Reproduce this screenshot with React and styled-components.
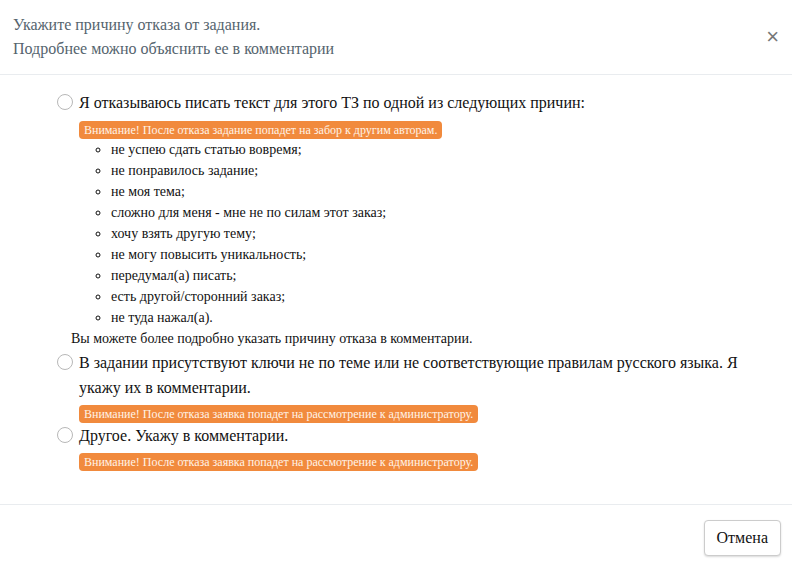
import React from 'react'
import styled, { createGlobalStyle } from 'styled-components'

const Global = createGlobalStyle`
body{
    margin: 0;
    background: #fff;
    font-family: "Liberation Serif", serif;
    color: #111;
}
`

const Modal = styled.div`
width: 792px;
height: 566px;
display: flex;
flex-direction: column;
`

const Header = styled.div`
height: 75px;
box-sizing: border-box;
border-bottom: 1px solid #e9ecef;
display: flex;
align-items: center;
justify-content: space-between;
padding: 0 13px 0 13px;
`

const Title = styled.div`
color: #55646e;
font-size: 16px;
line-height: 24px;
`

const Close = styled.button`
border: none;
background: none;
color: #777;
font-size: 22px;
padding: 0;
font-family: "Liberation Sans", sans-serif;
font-weight: 400;
line-height: 1;
cursor: pointer;
`

const Body = styled.div`
flex: 1;
padding: 15px 20px 0 57px;
box-sizing: border-box;
`

const Option = styled.label`
display: flex;
align-items: flex-start;
gap: 6px;
font-size: 16px;
line-height: 25px;
`

const Radio = styled.span`
flex: none;
width: 16px;
height: 16px;
box-sizing: border-box;
border: 1px solid #b8b8b8;
border-radius: 50%;
margin-top: 4px;
`

const Badge = styled.div`
width: fit-content;
margin: ${p => p.top || 5}px 0 0 22px;
background: #f18a3d;
color: #fff3e8;
font-size: 12px;
line-height: 18px;
padding: 0 5px;
border-radius: 4px;
`

const List = styled.ul`
margin: 0 0 0 22px;
padding: 0 0 0 32px;
list-style: circle;
font-size: 14px;
line-height: 21px;
`

const Note = styled.div`
font-size: 14px;
line-height: 21px;
margin: 0 0 1px 14px;
`

const Group = styled.div`
margin-bottom: ${p => p.gap || 0}px;
`

const Footer = styled.div`
height: 62px;
border-top: 1px solid #e9ecef;
display: flex;
justify-content: flex-end;
align-items: flex-start;
padding: 15px 11px 0 0;
box-sizing: border-box;
`

const Button = styled.button`
height: 36px;
padding: 0 12px;
font-family: "Liberation Serif", serif;
font-size: 16px;
color: #111;
background: #fff;
border: 1px solid #ccc;
border-radius: 4px;
box-shadow: 0 1px 2px rgba(0,0,0,0.15);
`

const reasons = [
    'не успею сдать статью вовремя;',
    'не понравилось задание;',
    'не моя тема;',
    'сложно для меня - мне не по силам этот заказ;',
    'хочу взять другую тему;',
    'не могу повысить уникальность;',
    'передумал(а) писать;',
    'есть другой/сторонний заказ;',
    'не туда нажал(а).',
]

export default function App() {
    return (
        <Modal>
            <Global />
            <Header>
                <Title>
                    Укажите причину отказа от задания.<br />
                    Подробнее можно объяснить ее в комментарии
                </Title>
                <Close>×</Close>
            </Header>
            <Body>
                <Group>
                    <Option><Radio />Я отказываюсь писать текст для этого ТЗ по одной из следующих причин:</Option>
                    <Badge top={6}>Внимание! После отказа задание попадет на забор к другим авторам.</Badge>
                    <List>
                        {reasons.map(r => <li key={r}>{r}</li>)}
                    </List>
                    <Note>Вы можете более подробно указать причину отказа в комментарии.</Note>
                </Group>
                <Group>
                    <Option><Radio />В задании присутствуют ключи не по теме или не соответствующие правилам русского языка. Я укажу их в комментарии.</Option>
                    <Badge>Внимание! После отказа заявка попадет на рассмотрение к администратору.</Badge>
                </Group>
                <Group>
                    <Option><Radio />Другое. Укажу в комментарии.</Option>
                    <Badge>Внимание! После отказа заявка попадет на рассмотрение к администратору.</Badge>
                </Group>
            </Body>
            <Footer>
                <Button>Отмена</Button>
            </Footer>
        </Modal>
    )
}
